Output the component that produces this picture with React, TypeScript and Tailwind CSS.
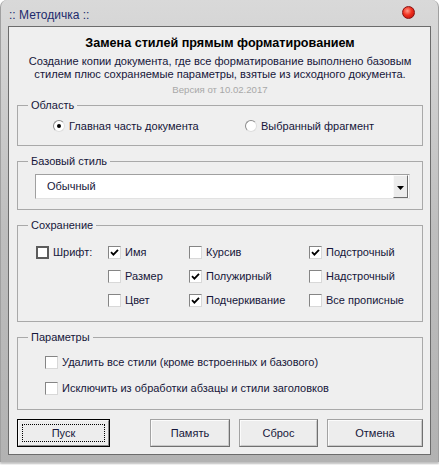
import React from "react";

const FONT = "font-['Liberation_Sans',Arial,sans-serif]";

const Check = () => (
  <svg viewBox="0 0 9 9" className="w-[9px] h-[9px]">
    <path d="M1 4.2 L3.4 6.6 L8 1.8" fill="none" stroke="#000" strokeWidth="1.8" />
  </svg>
);

const Checkbox = ({ checked, label }: { checked?: boolean; label: string }) => (
  <div className="flex items-center h-[14px]">
    <span className="w-[13px] h-[13px] bg-white border border-[#858585] border-b-[#d8d8d8] border-r-[#d8d8d8] flex items-center justify-center shrink-0">
      {checked && <Check />}
    </span>
    <span className="ml-[4px] whitespace-nowrap">{label}</span>
  </div>
);

const Radio = ({ checked, label }: { checked?: boolean; label: string }) => (
  <div className="flex items-center h-[14px]">
    <span className="w-[12px] h-[12px] rounded-full bg-white border border-[#8c8c8c] border-b-[#dedede] border-r-[#dedede] flex items-center justify-center shrink-0">
      {checked && <span className="w-[4px] h-[4px] rounded-full bg-black" />}
    </span>
    <span className="ml-[4px] whitespace-nowrap">{label}</span>
  </div>
);

const Group = ({
  title,
  className,
  children,
}: {
  title: string;
  className: string;
  children: React.ReactNode;
}) => (
  <fieldset className={`border border-[#a9a9a9] ${className}`}>
    <legend className="ml-[10px] px-[3px] leading-[14px]">{title}</legend>
    {children}
  </fieldset>
);

const Button = ({ label, width, focused }: { label: string; width: string; focused?: boolean }) =>
  focused ? (
    <button className={`${width} h-[28px] border border-black p-0 bg-[#ededed]`}>
      <span className="flex h-full items-center justify-center border border-[#f8f8f8] border-b-[#8a8a8a] border-r-[#8a8a8a]">
        <span className="flex w-[calc(100%-6px)] h-[calc(100%-6px)] items-center justify-center border border-dotted border-black">
          {label}
        </span>
      </span>
    </button>
  ) : (
    <button className={`${width} h-[28px] border border-[#a3a3a3] border-b-[#707070] border-r-[#707070] bg-[#ededed] p-0`}>
      <span className="flex h-full items-center justify-center border border-[#fbfbfb] border-b-[#c9c9c9] border-r-[#c9c9c9]">
        {label}
      </span>
    </button>
  );

export default function App() {
  return (
    <div className={`w-[439px] h-[465px] bg-white ${FONT} text-[11px] text-[#16163a]`}>
      <div className="h-[462px] rounded-t-[7px] bg-gradient-to-b from-[#d9d9d9] via-[#bebebe] to-[#b2b2b2] px-[7px] pb-[7px] flex flex-col shadow-[0_2px_2px_rgba(0,0,0,0.25)] border-x border-[#a0a0a0]">
        {/* Title bar */}
        <div className="h-[26px] flex items-center justify-between pl-[1px] pr-[16px]">
          <span className="text-[12px] text-[#202a6c] pt-[3px]">:: Методичка ::</span>
          <span className="w-[13px] h-[13px] rounded-full border border-[#8a1010] bg-[radial-gradient(circle_at_40%_35%,#ff9a8a_0%,#f0301e_45%,#b40e0a_100%)] mb-[1px]" />
        </div>

        {/* Panel */}
        <div className="flex-1 border border-[#6c6c6c] bg-[#efefef] pl-[8px] pr-[7px] flex flex-col">
          <div className="mt-[8px] text-center font-bold text-[12.6px] leading-[16px] text-black">
            Замена стилей прямым форматированием
          </div>
          <div className="mt-[4px] text-center text-[11.1px] leading-[13px]">
            Создание копии документа, где все форматирование выполнено базовым
            <br />
            стилем плюс сохраняемые параметры, взятые из исходного документа.
          </div>
          <div className="mt-[3px] text-center text-[9.6px] leading-[12px] text-[#a8a8a8]">
            Версия от 10.02.2017
          </div>

          <Group title="Область" className="mt-[2px] h-[48px]">
            <div className="mt-[7px] pl-[35px] flex">
              <div className="w-[192px]">
                <Radio checked label="Главная часть документа" />
              </div>
              <Radio label="Выбранный фрагмент" />
            </div>
          </Group>

          <Group title="Базовый стиль" className="mt-[8px] h-[56px]">
            <div className="mt-[6px] ml-[17px] w-[375px] h-[25px] bg-white border border-[#a0a0a0] border-b-[#e2e2e2] border-r-[#e2e2e2] flex items-center justify-between">
              <span className="pl-[11px]">Обычный</span>
              <span className="w-[15px] h-[23px] mr-[1px] bg-[#ececec] border border-[#fafafa] border-b-[#6e6e6e] border-r-[#6e6e6e] flex items-center justify-center">
                <svg viewBox="0 0 7 4" className="w-[7px] h-[4px] mt-[2px]">
                  <path d="M0 0 H7 L3.5 4 Z" fill="#000" />
                </svg>
              </span>
            </div>
          </Group>

          <Group title="Сохранение" className="mt-[8px] h-[104px]">
            <div className="mt-[13px] pl-[18px] grid grid-cols-[72px_81px_120px_1fr] gap-y-[10px]">
              <div className="flex items-center h-[14px]">
                <span className="w-[13px] h-[13px] bg-white border-2 border-[#5c5c5c] shrink-0" />
                <span className="ml-[4px]">Шрифт:</span>
              </div>
              <Checkbox checked label="Имя" />
              <Checkbox label="Курсив" />
              <Checkbox checked label="Подстрочный" />
              <div />
              <Checkbox label="Размер" />
              <Checkbox checked label="Полужирный" />
              <Checkbox label="Надстрочный" />
              <div />
              <Checkbox label="Цвет" />
              <Checkbox checked label="Подчеркивание" />
              <Checkbox label="Все прописные" />
            </div>
          </Group>

          <Group title="Параметры" className="mt-[8px] h-[80px]">
            <div className="mt-[11px] pl-[27px] flex flex-col gap-[12px]">
              <Checkbox label="Удалить все стили (кроме встроенных и базового)" />
              <Checkbox label="Исключить из обработки абзацы и стили заголовков" />
            </div>
          </Group>

          <div className="mt-[9px] flex items-center">
            <Button label="Пуск" width="w-[96px]" focused />
            <div className="ml-[40px] flex gap-[9px]">
              <Button label="Память" width="w-[80px]" />
              <Button label="Сброс" width="w-[79px]" />
              <Button label="Отмена" width="w-[96px]" />
            </div>
          </div>
        </div>
      </div>
    </div>
  );
}
